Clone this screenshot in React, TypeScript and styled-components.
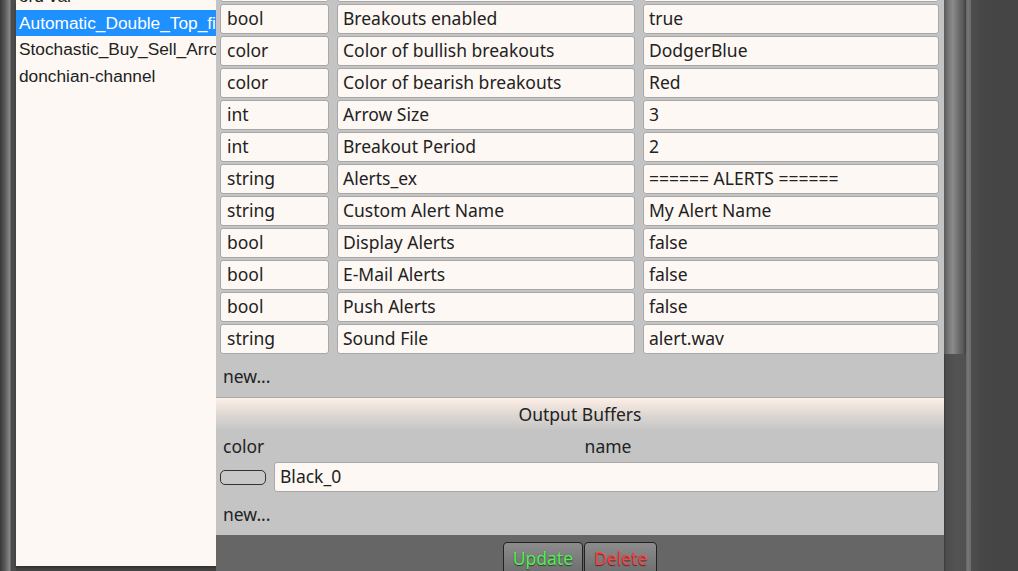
import React from "react";
import styled, { createGlobalStyle } from "styled-components";

const Global = createGlobalStyle`
  html, body { margin: 0; padding: 0; background: #444; }
  body { width: 1018px; height: 571px; overflow: hidden; }
`;

const Screen = styled.div`
  display: flex;
  width: 1018px;
  height: 571px;
  overflow: hidden;
  background: #444;
`;

const LeftRail = styled.div`
  width: 16px;
  flex: none;
  background: linear-gradient(to right, #383838 0px, #5a5a5a 5px, #8a8a8a 10px, #4c4c4c 11px, #4c4c4c 16px);
`;

const ListPanel = styled.div`
  width: 200px;
  height: 566px;
  flex: none;
  background: #fdf8f4;
  overflow: hidden;
  box-shadow: 0 2px 2px #333;
`;

const ListInner = styled.ul`
  list-style: none;
  margin: -17px 0 0 0;
  padding: 0;
`;

const ListItem = styled.li<{ $selected?: boolean }>`
  height: 26.5px;
  line-height: 26.5px;
  padding-left: 3px;
  white-space: nowrap;
  overflow: hidden;
  font-family: "Liberation Sans", Arial, sans-serif;
  font-size: 17.3px;
  color: ${(p) => (p.$selected ? "#fff" : "#222")};
  background: ${(p) => (p.$selected ? "#1e90ff" : "transparent")};
`;

const MainCol = styled.div`
  width: 728px;
  flex: none;
  display: flex;
  flex-direction: column;
  background: #666;
  font-family: "Noto Sans", "Open Sans", sans-serif;
  color: #222;
`;

const Sheet = styled.div`
  height: 535px;
  flex: none;
  background: #c4c4c4;
  overflow: hidden;
`;

const ParamList = styled.div`
  display: flex;
  flex-direction: column;
  gap: 2px;
  margin-top: -28px;
  padding: 0 5px 0 4px;
`;

const ParamRow = styled.div`
  display: grid;
  grid-template-columns: 109px 298px 296px;
  column-gap: 8px;
`;

const Field = styled.div<{ $pad?: number }>`
  height: 30px;
  box-sizing: border-box;
  border: 1px solid #a8a8a8;
  border-radius: 3px;
  background: #fdf8f4;
  padding-left: ${(p) => p.$pad ?? 5}px;
  font-size: 17.5px;
  line-height: 27px;
  white-space: nowrap;
  overflow: hidden;
`;

const NewLink = styled.div<{ $h: number }>`
  height: ${(p) => p.$h}px;
  padding-left: 7px;
  display: flex;
  align-items: center;
  font-size: 17.5px;
  color: #222;
`;

const SectionHeader = styled.div`
  height: 33px;
  box-sizing: border-box;
  border-top: 1px solid #aaa;
  background: linear-gradient(to bottom, #fdefe6 0%, #dcd6d2 55%, #c6c6c6 100%);
  display: flex;
  align-items: center;
  justify-content: center;
  font-size: 17.5px;
`;

const LabelsRow = styled.div`
  height: 32px;
  display: grid;
  grid-template-columns: 54px 1fr;
  align-items: center;
  padding: 0 5px 0 7px;
  font-size: 17.5px;
`;

const CenteredLabel = styled.span`
  text-align: center;
`;

const BufferRow = styled.div`
  display: flex;
  align-items: center;
  gap: 8px;
  padding: 0 5px 0 4px;
  height: 30px;
`;

const Swatch = styled.div`
  width: 46px;
  height: 15px;
  box-sizing: border-box;
  border: 1px solid #333;
  border-radius: 5px;
  background: #c8c8c8;
  flex: none;
`;

const Footer = styled.div`
  flex: 1;
  display: flex;
  justify-content: center;
  align-items: flex-start;
  padding-top: 7px;
  gap: 1px;
`;

const ActionButton = styled.button<{ $color: string }>`
  height: 36px;
  padding: 4px 9px 0;
  border: 1px solid #222;
  border-radius: 4px 4px 0 0;
  background: linear-gradient(to bottom, #8c8c8c, #6a6a6a);
  font-family: "Noto Sans", "Open Sans", sans-serif;
  font-size: 17.5px;
  line-height: 23px;
  color: ${(p) => p.$color};
  text-shadow: 0 1px 1px #333;
  display: flex;
  align-items: flex-start;
  box-sizing: border-box;
`;

const ScrollTrack = styled.div`
  width: 22px;
  flex: none;
  background: linear-gradient(to right, #3a3a3a 0px, #4c4c4c 2px, #545454 12px, #505050 22px);
`;

const ScrollThumb = styled.div`
  height: 354px;
  background: linear-gradient(to right, #5a5a5a 0px, #7a7a7a 5px, #8a8a8a 9px, #6a6a6a 15px, #5a5a5a 19px, #404040 22px);
`;

const Divider = styled.div`
  width: 5px;
  flex: none;
  background: linear-gradient(to right, #666 0px, #777 2px, #6a6a6a 5px);
`;

const RightDark = styled.div`
  flex: 1;
  background: linear-gradient(to right, #4e4e4e 0px, #474747 10px, #444 48px);
`;

const listItems = [
  "ord var",
  "Automatic_Double_Top_finder",
  "Stochastic_Buy_Sell_Arrows",
  "donchian-channel",
];

const params: [string, string, string][] = [
  ["string", "Breakouts_ex", "====== BREAKOUTS ======"],
  ["bool", "Breakouts enabled", "true"],
  ["color", "Color of bullish breakouts", "DodgerBlue"],
  ["color", "Color of bearish breakouts", "Red"],
  ["int", "Arrow Size", "3"],
  ["int", "Breakout Period", "2"],
  ["string", "Alerts_ex", "====== ALERTS ======"],
  ["string", "Custom Alert Name", "My Alert Name"],
  ["bool", "Display Alerts", "false"],
  ["bool", "E-Mail Alerts", "false"],
  ["bool", "Push Alerts", "false"],
  ["string", "Sound File", "alert.wav"],
];

export default function App() {
  return (
    <>
      <Global />
      <Screen>
        <LeftRail />
        <ListPanel>
          <ListInner>
            {listItems.map((it, i) => (
              <ListItem key={it} $selected={i === 1}>
                {it}
              </ListItem>
            ))}
          </ListInner>
        </ListPanel>
        <MainCol>
          <Sheet>
            <ParamList>
              {params.map(([t, n, v]) => (
                <ParamRow key={n}>
                  <Field $pad={6}>{t}</Field>
                  <Field>{n}</Field>
                  <Field>{v}</Field>
                </ParamRow>
              ))}
            </ParamList>
            <NewLink $h={43}>new...</NewLink>
            <SectionHeader>Output Buffers</SectionHeader>
            <LabelsRow>
              <span>color</span>
              <CenteredLabel>name</CenteredLabel>
            </LabelsRow>
            <BufferRow>
              <Swatch />
              <Field style={{ flex: 1 }}>Black_0</Field>
            </BufferRow>
            <NewLink $h={43}>new...</NewLink>
          </Sheet>
          <Footer>
            <ActionButton $color="#52f052">Update</ActionButton>
            <ActionButton $color="#ff4040">Delete</ActionButton>
          </Footer>
        </MainCol>
        <ScrollTrack>
          <ScrollThumb />
        </ScrollTrack>
        <Divider />
        <RightDark />
      </Screen>
    </>
  );
}
